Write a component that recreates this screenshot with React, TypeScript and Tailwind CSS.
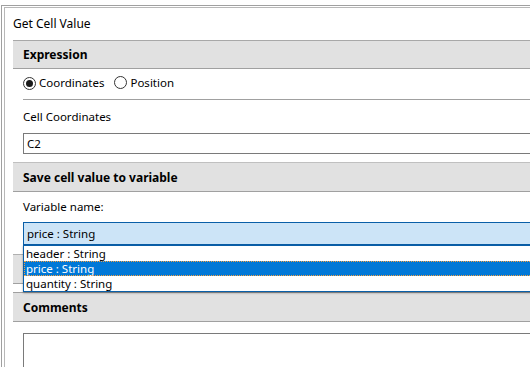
export default function App() {
  const Radio = ({ checked }: { checked?: boolean }) => (
    <span className="inline-flex w-[13px] h-[13px] rounded-full border border-[#333] items-center justify-center bg-white">
      {checked && <span className="w-[7px] h-[7px] rounded-full bg-[#1a1a1a]" />}
    </span>
  );
  return (
    <div className="w-[530px] h-[367px] overflow-hidden bg-white relative text-[11.5px] text-black font-['Noto_Sans',sans-serif]">
      <div className="pt-[5px] pl-[1px]">
        <div className="border-t border-l border-[#a0a0a0] w-[600px] h-[400px] pl-[2px] pt-[1px]">
          <div className="border-t border-l border-[#b8b8b8] h-full pl-[8px]">
            <div className="h-[32px] flex items-center leading-none text-[12px]">Get Cell Value</div>

            <div className="h-[29px] border-t border-b border-t-[#a8a8a8] border-b-[#a0a0a0] bg-[#e1e1e1] flex items-center pl-[10px] pt-[1px] font-bold leading-none text-[12px]">
              Expression
            </div>
            <div className="ml-[10px]">
              <div className="h-[31px] border-b border-[#a0a0a0] flex items-center pb-[2px] leading-none">
                <Radio checked />
                <span className="ml-[3px]">Coordinates</span>
                <span className="ml-[10px]"><Radio /></span>
                <span className="ml-[3px]">Position</span>
              </div>
              <div className="h-[33px] flex items-center leading-none">Cell Coordinates</div>
              <div className="h-[21px] border border-[#7a7a7a] flex items-center pl-[3px] leading-none">C2</div>
            </div>

            <div className="mt-[8px] h-[30px] border-t border-b border-t-[#c0c0c0] border-b-[#a0a0a0] bg-[#e1e1e1] flex items-center pl-[10px] pt-[1px] font-bold leading-none text-[12px]">
              Save cell value to variable
            </div>
            <div className="ml-[10px]">
              <div className="h-[30px] flex items-center leading-none">Variable name:</div>
              <div className="h-[24px] border border-b-2 border-[#0a5fa8] bg-[#cce4f7] flex items-center pl-[3px] leading-none">
                price : String
              </div>
            </div>

            <div className="mt-[8px] h-[30px] border-t border-b border-t-[#b0b0b0] border-b-[#a0a0a0] bg-[#e1e1e1]" />

            <div className="mt-[8px] h-[30px] border-t border-b border-t-[#a0a0a0] border-b-[#a0a0a0] bg-[#e1e1e1] flex items-center pl-[10px] pt-[2px] font-bold leading-none text-[12px]">
              Comments
            </div>
            <div className="ml-[10px] mt-[11px] h-[80px] border border-[#7a7a7a]" />
          </div>
        </div>
      </div>

      <div className="absolute left-[23px] top-[245px] w-[560px] border border-[#0a5fa8] bg-white shadow-[0_1px_2px_rgba(0,0,0,0.35)] leading-none">
        <div className="h-[15px] flex items-center pl-[2px]">header : String</div>
        <div className="h-[15px] flex items-center pl-[2px] bg-[#0078d7] text-white outline outline-1 outline-dotted outline-[#f5a040] -outline-offset-1">price : String</div>
        <div className="h-[15px] flex items-center pl-[2px]">quantity : String</div>
      </div>
    </div>
  );
}
